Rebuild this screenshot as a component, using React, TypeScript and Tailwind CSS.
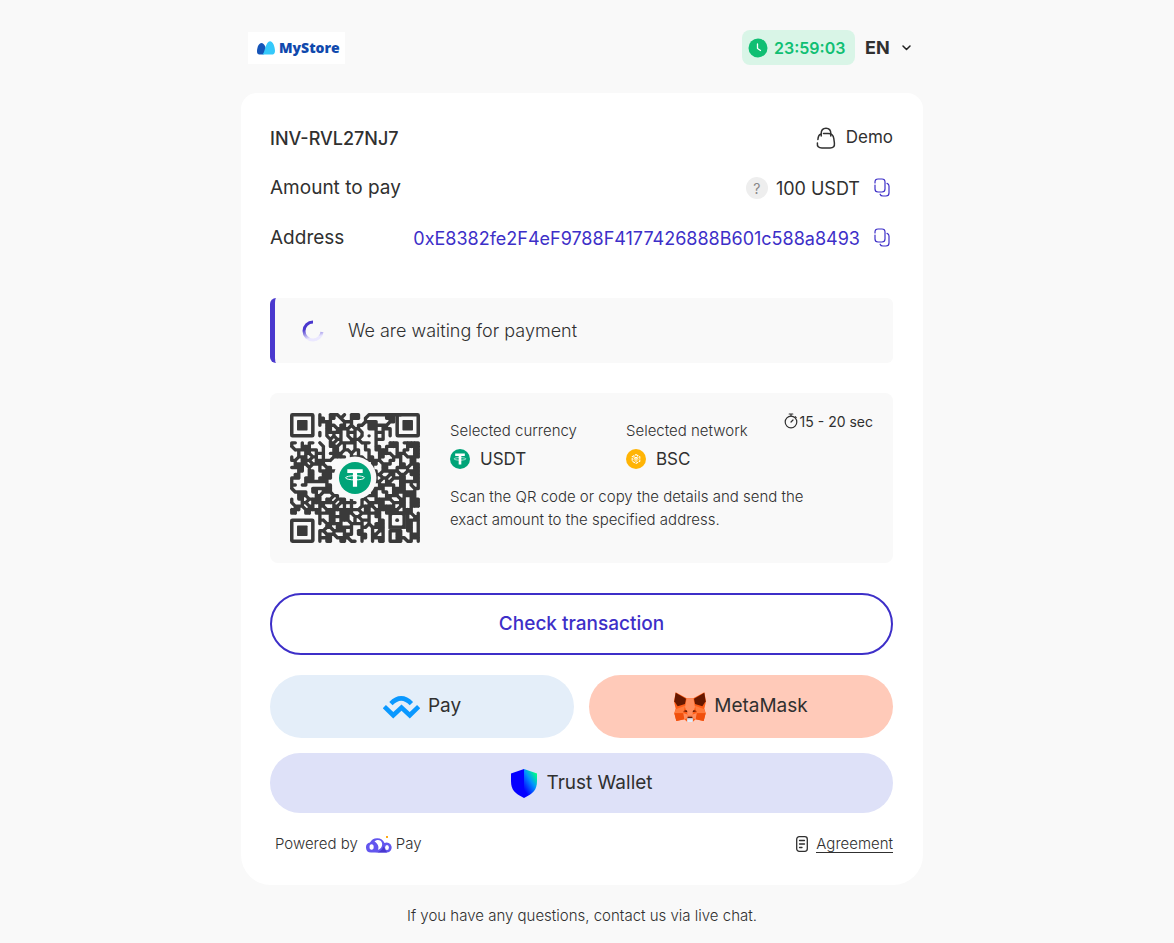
import { useState } from 'react'

const ADDRESS = '0xE8382fe2F4eF9788F4177426888B601c588a8493'

// 37x37 modules, finder and alignment patterns are drawn separately
const QR_ROWS = [
  '........#..###.#.###..##########.....',
  '........##.##.#..###.#.....###.......',
  '........####...###...####...##.......',
  '........#.###.##.#.##.######.........',
  '..........##.####.##..###.###........',
  '........#.#####.###.#...###.#........',
  '........#.#.#.#.#.#.#.#.#.#.#........',
  '...........#.##..###....###..........',
  '##.#.##.#..##.#####.###.#...###.#####',
  '#..###...#.###.#..#..#..##.####..####',
  '.#######.#..##.##.##.##.####..#.##.##',
  '..#.##.###.####..#.#..#..####.###..##',
  '#.###.##.#..####.####.##.##..###.####',
  '##.###.#####.........#####..##.#..##.',
  '.####.####.............##.###..##.###',
  '####.#..#.##..........##..##..####.##',
  '..##.##.######........###.#####..####',
  '.##..##..###..........####..##.##.###',
  '###.###.####...........##.##.####..##',
  '#...#######............###.##..######',
  '##.##.....##..........##.#####.##.#.#',
  '#.....######...........####..####..##',
  '.####.##.###...........##.##.#######.',
  '..###..##...##.......####..####.####.',
  '#.##.####.##.###.#..##..#####..##.###',
  '#..##.#######.#####.#.#####..####.###',
  '.###.##.##..##.#.#..####.#####.##.###',
  '###.#####.##########.##.#######.###..',
  '##..##.######.####..######.########.#',
  '........#..######.##..#.##.......#.##',
  '........##.##.###.#.###..##......####',
  '........#.#####..####.#.###......##.#',
  '..........##.#####..##.####......##.#',
  '........##..####.#.##..#.##.####.##.#',
  '........#.###..###.###.##.#.#.##..###',
  '........####.####...##.####.#.###.###',
  '........#.##..##.##.#..#.##.####.##.#',
]

// joins neighbouring modules with round strokes so they flow into each other
function qrPath() {
  const on = (r: number, c: number) => QR_ROWS[r]?.[c] === '#'
  let d = ''
  QR_ROWS.forEach((row, r) => {
    for (let c = 0; c < row.length; c++) {
      if (!on(r, c)) continue
      const start = `M${c + 0.5} ${r + 0.5}`
      const right = on(r, c + 1)
      const below = on(r + 1, c)
      d += `${start}h.01`
      if (right) d += `${start}h1`
      if (below) d += `${start}v1`
      if (on(r + 1, c + 1) && right === below) d += `${start}l1 1`
      if (on(r + 1, c - 1) && !below && !on(r, c - 1)) d += `${start}l-1 1`
    }
  })
  return d
}

function Finder({ x, y }: { x: number; y: number }) {
  return (
    <g>
      <rect x={x + 0.5} y={y + 0.5} width="6" height="6" rx=".2" fill="none" stroke="#3a3a3a" />
      <rect x={x + 2} y={y + 2} width="3" height="3" rx=".2" fill="#3a3a3a" />
    </g>
  )
}

function TetherIcon({ className }: { className?: string }) {
  return (
    <svg viewBox="0 0 32 32" className={className} aria-hidden="true">
      <circle cx="16" cy="16" r="16" fill="#00a478" />
      <path d="M8.3 7.2h15.4v3.9h-5.6v13.7h-4.2V11.1H8.3z" fill="#fff" />
      <ellipse cx="16" cy="15.8" rx="9.4" ry="2.1" fill="none" stroke="#fff" strokeWidth="1" />
    </svg>
  )
}

function QrCode() {
  return (
    <div className="relative size-[130px] shrink-0">
      <svg viewBox="0 0 37 37" className="size-full" role="img" aria-label="Payment QR code">
        <path d={qrPath()} fill="none" stroke="#3a3a3a" strokeWidth=".96" strokeLinecap="round" />
        <Finder x={0} y={0} />
        <Finder x={30} y={0} />
        <Finder x={0} y={30} />
        <rect x="28" y="28" width="5" height="5" fill="#3a3a3a" />
        <rect x="29" y="29" width="3" height="3" rx=".3" fill="#f9f9f9" />
        <circle cx="30.5" cy="30.5" r=".55" fill="#3a3a3a" />
        <circle cx="18.5" cy="18.5" r="6.1" fill="#f9f9f9" />
      </svg>
      <TetherIcon className="absolute inset-0 m-auto size-8" />
    </div>
  )
}

function BscIcon() {
  return (
    <svg viewBox="0 0 30 30" className="size-5" aria-hidden="true">
      <circle cx="15" cy="15" r="15" fill="#ffb405" />
      <path d="M15 8.4l5.7 3.3v6.6L15 21.6l-5.7-3.3v-6.6z" fill="none" stroke="#fff" strokeWidth="1.6" strokeDasharray="4.2 1.2" />
      <path d="M11.3 13l3.7 2.2 3.7-2.2M15 15.2v4.2M12.2 11.6l2.8 1.6 2.8-1.6M11.4 15.6l1.7 1M18.6 15.6l-1.7 1" fill="none" stroke="#fff" strokeWidth="1.5" />
    </svg>
  )
}

function CopyButton({ label, value }: { label: string; value: string }) {
  return (
    <button type="button" aria-label={label} onClick={() => navigator.clipboard?.writeText(value)} className="ml-[14px] mr-[3px] cursor-pointer text-[#3d2fc8]">
      <svg viewBox="0 0 16 20" className="h-5 w-4" fill="none" stroke="currentColor" strokeWidth="1.2" strokeLinecap="round" aria-hidden="true">
        <path d="M1 7v4c0 2 1 3 3 3h4c2 0 3-1 3-3V4c0-2-1-3-3-3H4C2 1 1 2 1 4v1" />
        <path d="M13 5.4c1.3.4 2 1.2 2 2.6v7c0 2-1 3-3 3H9c-1.5 0-2.5-.6-2.900-1.800" />
      </svg>
    </button>
  )
}

function StoreLogo() {
  return (
    <div className="flex h-8 w-[97px] items-center gap-1 bg-white pl-[9px]">
      <svg viewBox="0 0 18 14" className="h-[14px] w-[18px] shrink-0" aria-hidden="true">
        <path d="M0 10.5C0 6 2 2 4.5 2S9 6 9 9.500 7 13.600 4 13.600 0 13 0 10.500z" fill="#1554b8" />
        <path d="M4.600 13.600C7 13 7.300 9.500 8.400 6.500 9.600 2.700 11 .3 13 .3c3 0 5 5.700 5 9.700 0 2.500-1.200 3.600-3.500 3.600z" fill="#35c9fb" />
      </svg>
      <span className="font-['Open_Sans','Inter',sans-serif] text-[14px] font-extrabold text-[#1049ad]">MyStore</span>
    </div>
  )
}

function FoxIcon() {
  return (
    <svg viewBox="0 0 96 90" className="h-[30px] w-8" aria-hidden="true">
      <path d="M5 1l33 18h20L91 1l5 27-5 22 4 14-6 23-24-5-9 8H40l-9-8-24 5L1 64l4-14L0 28z" fill="#ff5c16" />
      <path d="M5 2l31 18-3 16-22 7-10-15z" fill="#661800" />
      <path d="M91 2L60 20l3 16 22 7 10-15z" fill="#661800" />
      <path d="M38 19h20l5 26-9 26H42l-9-26z" fill="#ff8d5d" />
      <path d="M33 41L5 52l-4 12h27zM63 41l28 11 4 12H68z" fill="#ff7a3c" />
      <path d="M1 64h27l3 18-24 5zM95 64H68l-3 18 24 5z" fill="#f0500d" />
      <path d="M28 63l14 5-2 11-9 3zM68 63l-14 5 2 11 9 3z" fill="#ff8d5d" />
      <path d="M27 58l10-4 4 7zM69 58l-10-4-4 7z" fill="#661800" />
      <path d="M42 74h12l3 7-1 9H40l-1-9z" fill="#c0c4cd" />
      <path d="M42 74h12l2 4H40z" fill="#661800" />
      <path d="M40 82h16v8H40z" fill="#e7ebf6" />
    </svg>
  )
}

export default function App() {
  const [lang, setLang] = useState('EN')

  return (
    <div className="min-h-screen bg-[#f9f9f9] pr-[10px] font-['Inter','Liberation_Sans',sans-serif] text-[#303030]">
      <div className="mx-auto max-w-[682px] pb-4 pt-[30px]">
        <header className="mb-7 flex h-[35px] items-center justify-between pl-[7px] pr-3">
          <StoreLogo />
          <div className="flex items-center gap-[10px]">
            <div className="flex h-[35px] w-[113px] items-center gap-[6px] rounded-lg bg-[#d9f5e7] pl-[6px] text-[16px] font-semibold text-[#10bf73]">
              <svg viewBox="0 0 20 20" className="size-5 shrink-0" aria-hidden="true">
                <circle cx="10" cy="10" r="9.500" fill="#10bf73" />
                <path d="M9.500 6v4.500l3 2" fill="none" stroke="#fff" strokeWidth="1.300" strokeLinecap="round" />
              </svg>
              <time>23:59:03</time>
            </div>
            <div className="relative">
              <select
                aria-label="Language"
                value={lang}
                onChange={e => setLang(e.target.value)}
                className="w-[46px] cursor-pointer appearance-none bg-transparent text-[18px] font-bold"
              >
                <option>EN</option>
                <option>ES</option>
              </select>
              <svg viewBox="0 0 9 6" className="pointer-events-none absolute right-0 top-1/2 h-[6px] w-[9px] -translate-y-1/2" fill="none" stroke="#222" strokeWidth="1.500" strokeLinecap="round" strokeLinejoin="round" aria-hidden="true">
                <path d="M1 1l3.500 3.500L8 1" />
              </svg>
            </div>
          </div>
        </header>

        <main className="rounded-[30px] rounded-t-[16px] bg-white px-[30px] pb-[30px] pl-[29px] pt-5">
          <div className="flex h-[50px] items-center justify-between">
            <h1 className="text-[18px] font-medium">INV-RVL27NJ7</h1>
            <div className="flex items-center gap-[10px] text-[17px]">
              <svg viewBox="0 0 20 22" className="h-[22px] w-5" fill="none" stroke="currentColor" strokeWidth="1.500" strokeLinecap="round" aria-hidden="true">
                <path d="M5.200 9V6.500C5.200 3.500 7 1.200 10 1.200s4.800 2.300 4.800 5.300V9" />
                <path d="M7.500 6.500H12c3.800 0 5.400 1.400 5.800 5l.6 4.500c.4 3.400-1 5-4.300 5H5.900c-3.300 0-4.900-1.600-4.500-5M1.900 12.500c.2-2.500.8-4.500 2.600-5.300" />
              </svg>
              Demo
            </div>
          </div>
          <div className="flex h-[50px] items-center justify-between text-[19px]">
            <span>Amount to pay</span>
            <div className="flex items-center">
              <button type="button" aria-label="About the amount" className="mr-2 size-[22px] cursor-pointer rounded-full bg-[#eee] text-[14px] text-[#888]">?</button>
              <span className="text-[18px]">100 USDT</span>
              <CopyButton label="Copy amount" value="100" />
            </div>
          </div>
          <div className="flex h-[50px] items-center justify-between text-[19px]">
            <span>Address</span>
            <div className="flex items-center">
              <span className="text-[18px] text-[#3d2fc8]">{ADDRESS}</span>
              <CopyButton label="Copy address" value={ADDRESS} />
            </div>
          </div>

          <div role="status" className="mt-[35px] flex h-[65px] items-center gap-6 rounded-md border-l-[5px] border-[#4a38ce] bg-[#f9f9f9] pl-[27px] text-[18px] font-light">
            <svg viewBox="0 0 22 22" className="size-[22px]" fill="none" strokeWidth="3" aria-hidden="true">
              <defs>
                <linearGradient id="spin" x1="0" y1="0" x2=".25" y2="1">
                  <stop offset=".4" stopColor="#4a38ce" />
                  <stop offset=".95" stopColor="#ebe8ff" />
                </linearGradient>
              </defs>
              <path d="M11 2a9 9 0 0 0 0 18 9 9 0 0 0 9-8" stroke="url(#spin)" />
            </svg>
            We are waiting for payment
          </div>

          {/* Payment details */}
          <section className="mt-[30px] flex min-h-[170px] items-start gap-[30px] rounded-lg bg-[#f9f9f9] p-5">
            <QrCode />
            <div className="min-w-0 flex-1">
              <div className="grid grid-cols-[176px_1fr_auto]">
                <div className="pt-2">
                  <div className="text-[15px] font-light leading-5">Selected currency</div>
                  <div className="mt-2 flex items-center gap-[10px] text-[17px] leading-5">
                    <TetherIcon className="size-5" />
                    USDT
                  </div>
                </div>
                <div className="pt-2">
                  <div className="text-[15px] font-light leading-5">Selected network</div>
                  <div className="mt-2 flex items-center gap-[10px] text-[17px] leading-5">
                    <BscIcon />
                    BSC
                  </div>
                </div>
                <div className="flex h-4 items-center gap-[2px] text-[14px]">
                  <svg viewBox="0 0 14 16" className="h-4 w-[14px]" fill="none" stroke="currentColor" strokeWidth="1.200" strokeLinecap="round" aria-hidden="true">
                    <circle cx="7" cy="9" r="5.800" />
                    <path d="M5.200 1h3.600M7 1v2M11.200 3.600l1 1M7 9l2-2" />
                  </svg>
                  15 - 20 sec
                </div>
              </div>
              <p className="mt-4 max-w-[370px] text-[15px] font-light leading-[23px]">
                Scan the QR code or copy the details and send the exact amount to the specified address.
              </p>
            </div>
          </section>

          <button type="button" className="mt-[30px] h-[62px] w-full cursor-pointer rounded-full border-2 border-[#3d2fc8] text-[19px] font-medium text-[#3d2fc8]">
            Check transaction
          </button>
          <div className="mt-5 grid grid-cols-2 gap-[15px] text-[19px]">
            <button type="button" className="flex h-[63px] cursor-pointer items-center justify-center gap-2 rounded-full bg-[#e4eef9]">
              <svg viewBox="38 44 112 72" className="h-6 w-[37px]" fill="none" stroke="#0a98ff" strokeWidth="14" aria-hidden="true">
                <path d="M62 70q31-32 62 0" />
                <path d="M42 79l27 26 25-23 25 23 27-26" />
              </svg>
              Pay
            </button>
            <button type="button" className="flex h-[63px] cursor-pointer items-center justify-center gap-2 rounded-full bg-[#ffcab9]">
              <FoxIcon />
              MetaMask
            </button>
          </div>
          <button type="button" className="mt-[15px] flex h-[60px] w-full cursor-pointer items-center justify-center gap-2 rounded-full bg-[#dee1f8] text-[19px]">
            <svg viewBox="0 0 28 29" className="h-[29px] w-7" aria-hidden="true">
              <defs>
                <linearGradient id="shield" x1=".9" y1="0" x2=".2" y2="1">
                  <stop offset=".1" stopColor="#00ff87" />
                  <stop offset=".45" stopColor="#0094ff" />
                  <stop offset=".9" stopColor="#0500ff" />
                </linearGradient>
              </defs>
              <path d="M14 0v29C5 24.500 1 21 1 12V4.500z" fill="#0500ff" />
              <path d="M14 0v29c9-4.500 13-8 13-17V4.500z" fill="url(#shield)" />
            </svg>
            Trust Wallet
          </button>

          <footer className="mt-5 flex h-[22px] items-center justify-between pl-[5px] text-[15px] font-light">
            <div className="flex items-center">
              Powered by
              <svg viewBox="0 0 26 18" className="ml-2 mr-1 h-[18px] w-[26px]" aria-hidden="true">
                <path d="M5 17.500a5 5 0 0 1-1-9.900A8 8 0 0 1 18.500 8 5 5 0 1 1 21 17.500z" fill="#6356ee" />
                <path d="M9 17.500c4 0 7-2 8.500-6l3.500 6z" fill="#4937cf" />
                <ellipse cx="5.600" cy="12" rx="2.100" ry="2.800" fill="#fff" />
                <path d="M8.500 6.500c5-4 9.500 1 7 5.500-.8 1.600-2 2.400-3.500 2.700 1.300-3-.2-6.200-3.500-8.200z" fill="#fff" />
                <ellipse cx="21" cy="12.500" rx="1.900" ry="2.500" fill="#fff" />
                <rect x="20" y="1" width="2" height="2" fill="#ffaa17" />
              </svg>
              Pay
            </div>
            <a href="#agreement" className="flex items-center gap-2">
              <svg viewBox="0 0 12 16" className="h-4 w-3" fill="none" stroke="currentColor" strokeWidth="1.300" strokeLinecap="round" aria-hidden="true">
                <rect x=".7" y=".7" width="10.600" height="14.600" rx="2.500" />
                <path d="M3.500 4.500h5M3.500 8h5M3.500 11.500h2.500" />
              </svg>
              <span className="border-b border-[#303030] leading-[17px]">Agreement</span>
            </a>
          </footer>
        </main>

        <p className="mt-5 text-center text-[15px] font-light leading-[22px]">If you have any questions, contact us via live chat.</p>
      </div>
    </div>
  )
}
